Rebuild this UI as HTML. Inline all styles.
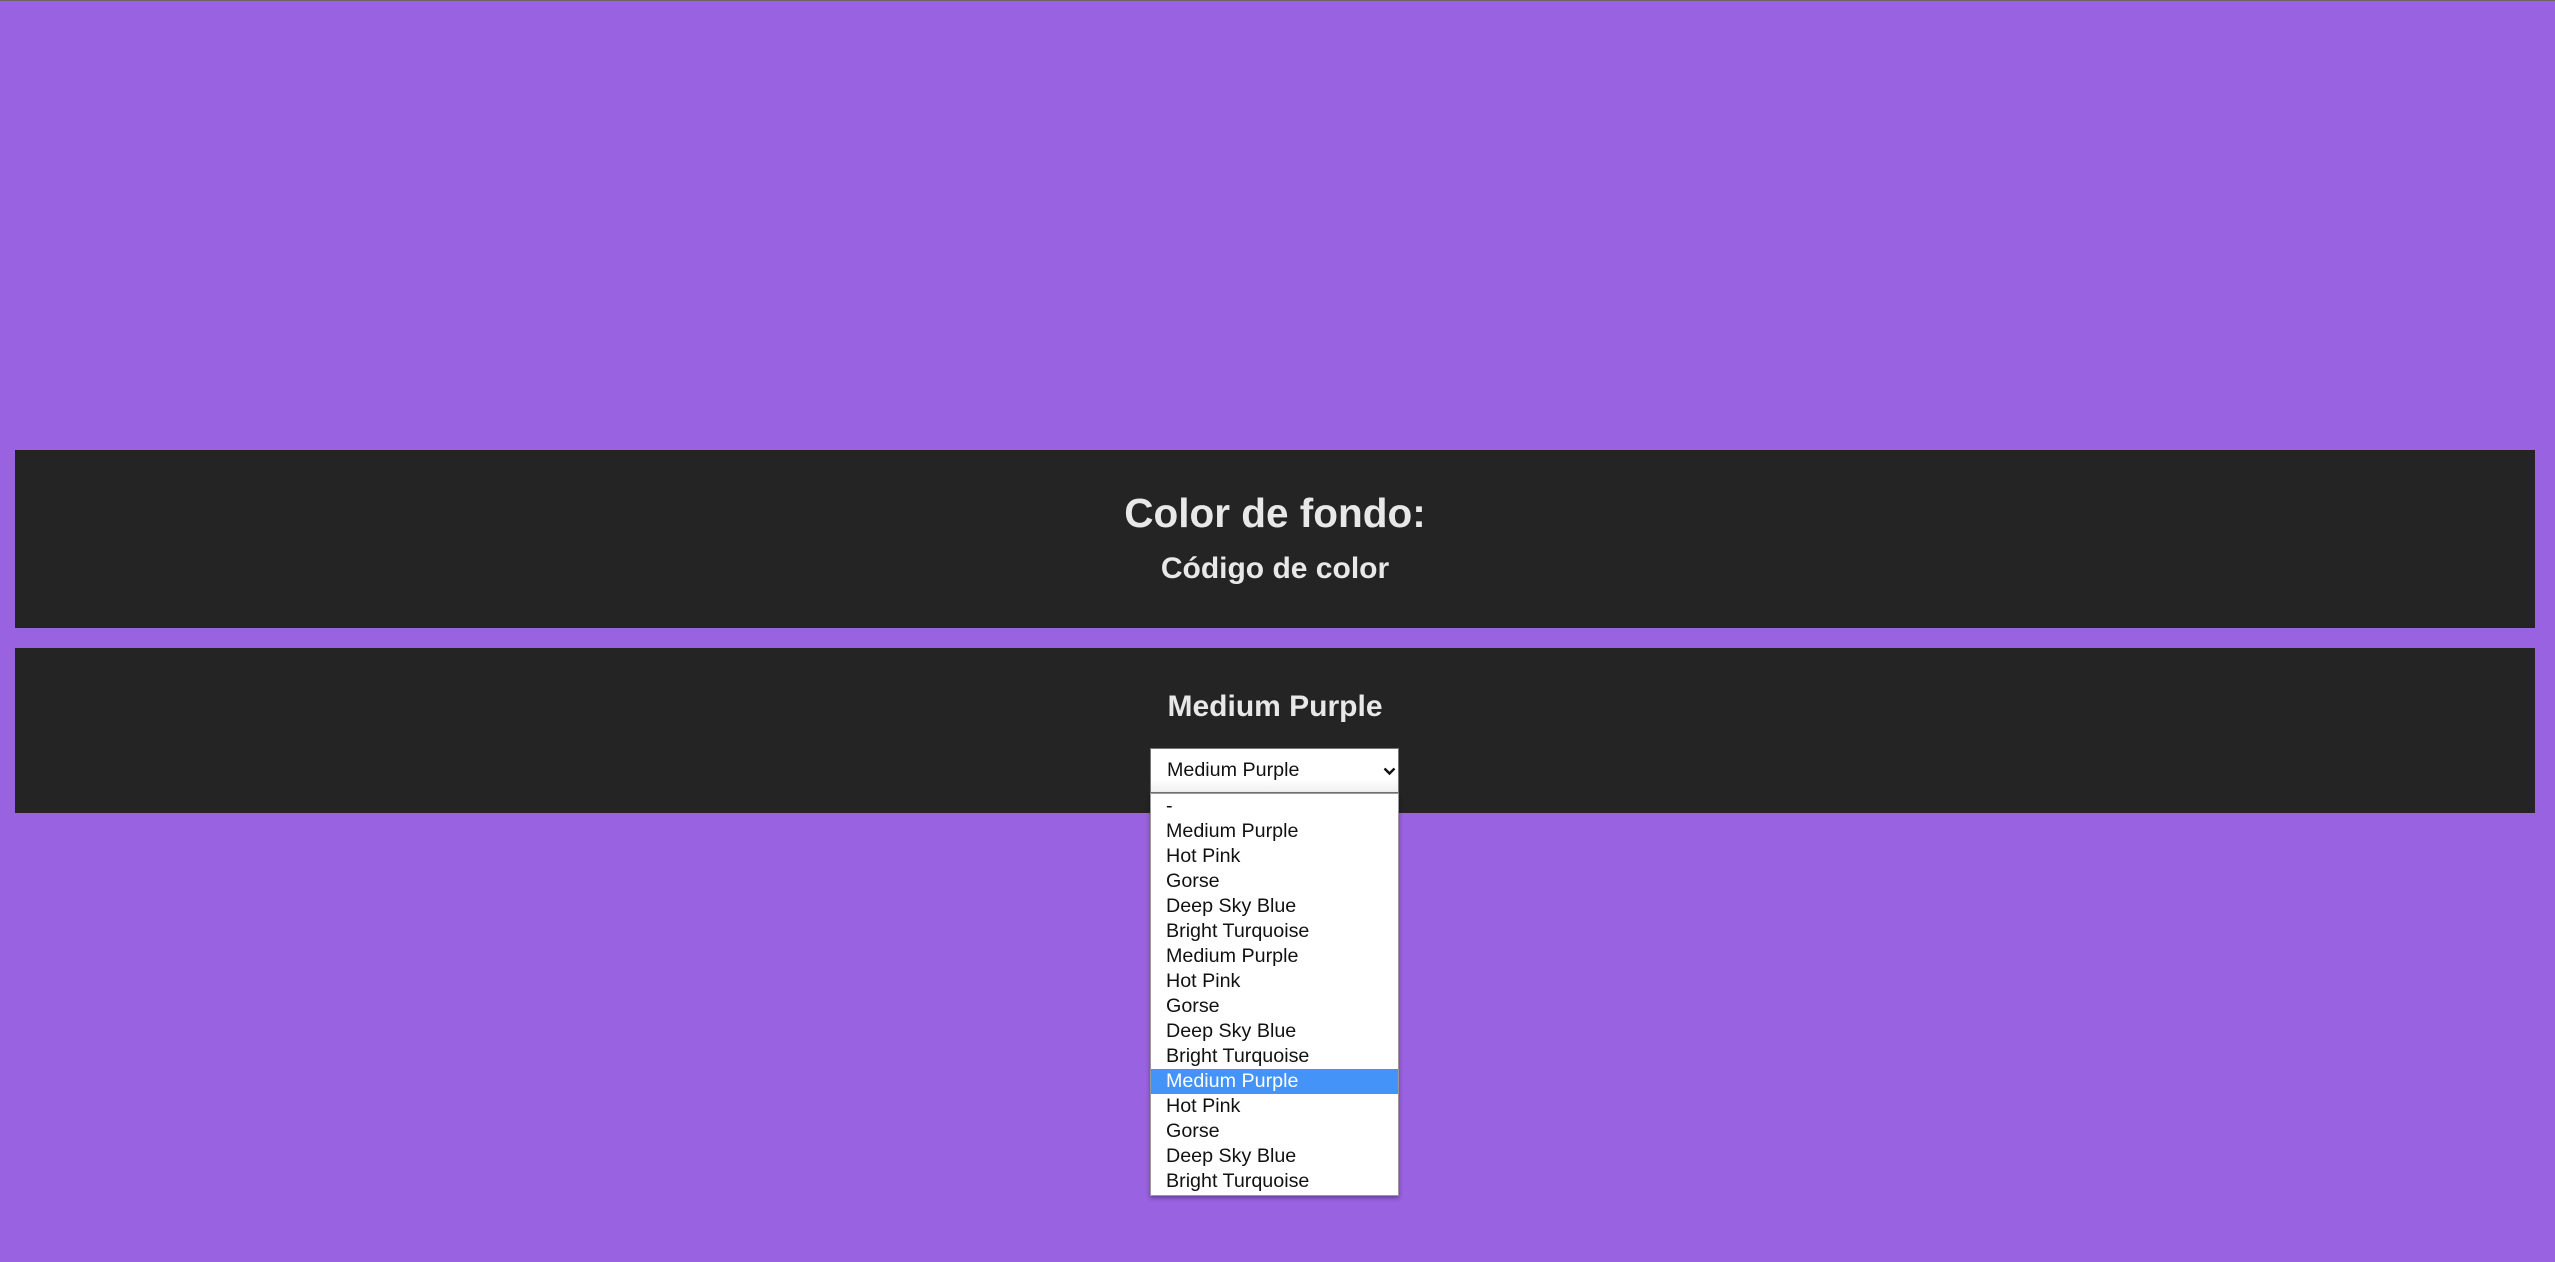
<!DOCTYPE html>
<html><head><meta charset="utf-8"><style>
html,body{margin:0;padding:0;width:2555px;height:1262px;overflow:hidden;background:#9962e0;font-family:"Liberation Sans",Arial,sans-serif;}
.top{position:absolute;left:0;top:0;width:2555px;height:1px;background:#666;}
.box{position:absolute;left:15px;width:2520px;background:#242424;color:#e8e8e8;text-align:center;font-weight:bold;}
.t{position:absolute;left:0;width:100%;white-space:nowrap;}
.sel{position:absolute;left:1150px;top:748px;width:249px;height:45px;background:linear-gradient(#fff 70%,#f0f0f0);border:1px solid #767676;box-sizing:border-box;}
.sel span{position:absolute;left:16px;top:10px;font-size:19.7px;color:#111;}
.list{position:absolute;left:1150px;top:793px;width:249px;height:403px;background:#fff;box-shadow:0 2px 4px rgba(0,0,0,.35);border:1px solid #999;box-sizing:border-box;}
.list div{height:25px;line-height:25px;font-size:19.7px;color:#111;padding-left:15px;white-space:nowrap;}
.list .h{background:#4493f8;color:#fff;}
</style></head><body>
<div class="top"></div>
<div class="box" style="top:450px;height:178px;">
  <div class="t" style="top:40px;font-size:40.5px;">Color de fondo:</div>
  <div class="t" style="top:102px;font-size:30px;">Código de color</div>
</div>
<div class="box" style="top:648px;height:165px;">
  <div class="t" style="top:42px;font-size:30px;">Medium Purple</div>
</div>
<div class="sel"><span>Medium Purple</span>
<svg style="position:absolute;left:232px;top:18px" width="13" height="9" viewBox="0 0 13 9"><path d="M1.5 1.5 L6.5 6.5 L11.5 1.5" stroke="#111" stroke-width="2.4" fill="none"/></svg></div>
<div class="list">
<div>-</div><div>Medium Purple</div><div>Hot Pink</div><div>Gorse</div><div>Deep Sky Blue</div><div>Bright Turquoise</div>
<div>Medium Purple</div><div>Hot Pink</div><div>Gorse</div><div>Deep Sky Blue</div><div>Bright Turquoise</div>
<div class="h">Medium Purple</div><div>Hot Pink</div><div>Gorse</div><div>Deep Sky Blue</div><div>Bright Turquoise</div>
</div>
</body></html>
